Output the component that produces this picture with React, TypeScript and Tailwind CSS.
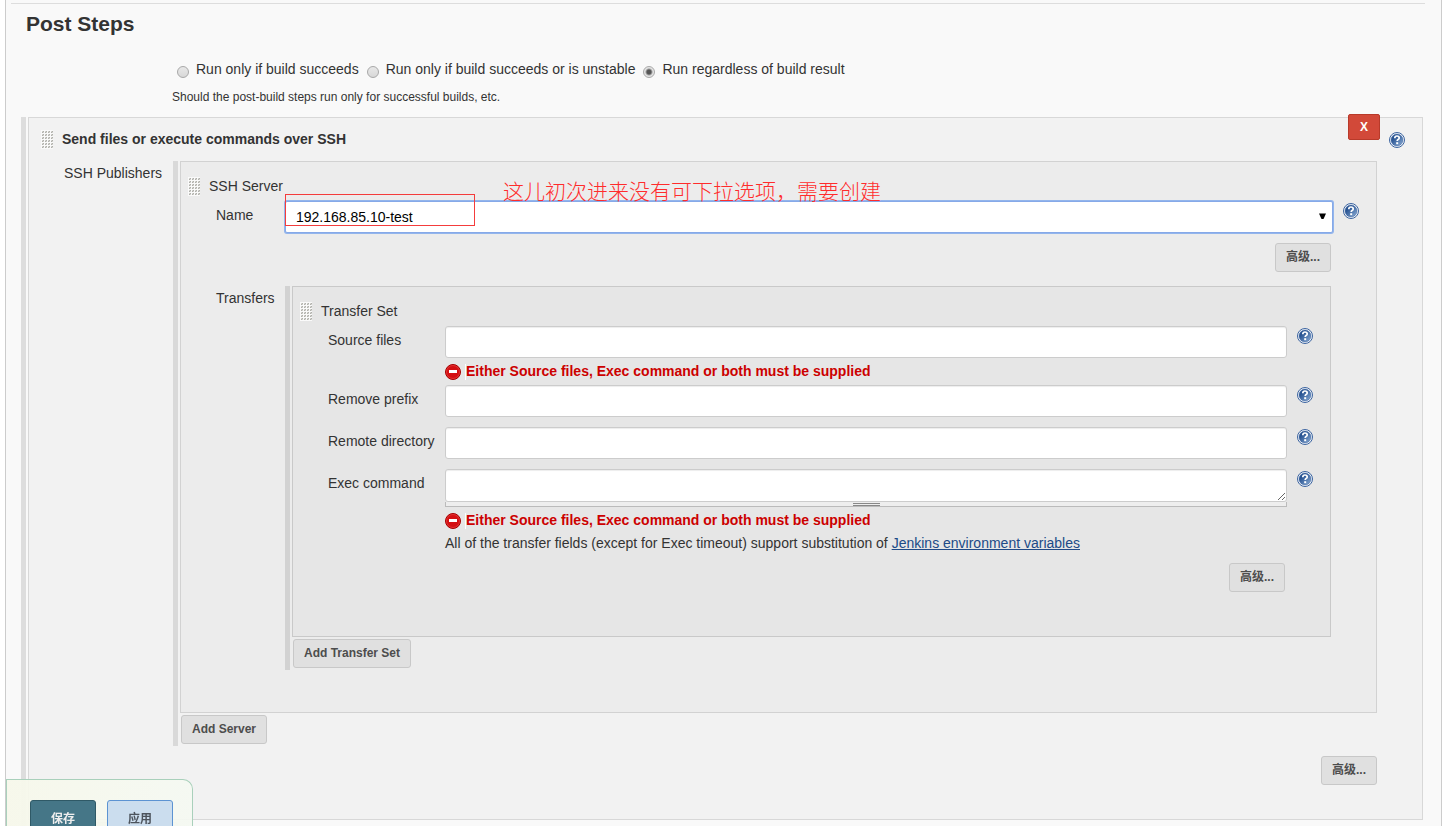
import type { ReactNode } from 'react';
import { useState } from 'react';
import clsx from 'clsx';

const RUN_OPTIONS = [
  { value: 'success', label: 'Run only if build succeeds' },
  { value: 'unstable', label: 'Run only if build succeeds or is unstable' },
  { value: 'always', label: 'Run regardless of build result' },
];

const SUPPLY_ERROR = 'Either Source files, Exec command or both must be supplied';

export default function App() {
  const [runWhen, setRunWhen] = useState('always');

  return (
    <div className="h-screen overflow-hidden bg-white font-['Liberation_Sans','Noto_Sans_CJK_SC',sans-serif] text-sm text-[#333]">
      <main className="mr-[6px] ml-[5px] min-h-screen border-x border-[#ccc] bg-[#f9f9f9] pt-[3px]">
        <hr className="mr-4 ml-[5px] border-[#ddd]" />
        <h1 className="mt-[6px] ml-5 text-[21px] leading-7 font-bold">Post Steps</h1>

        <div className="mt-[21px] ml-[171px] flex h-5 items-center gap-2">
          {RUN_OPTIONS.map((opt) => (
            <label key={opt.value} className="flex items-center gap-[7px] leading-5">
              <input
                type="radio"
                name="run-when"
                checked={runWhen === opt.value}
                onChange={() => setRunWhen(opt.value)}
                className="mt-[6px] size-3 appearance-none rounded-full border border-[#a8a8a8] bg-[linear-gradient(#e8e8e8,#d8d8d8)] checked:bg-[radial-gradient(circle,#555_0_2px,#e4e4e4_4px)]"
              />
              {opt.label}
            </label>
          ))}
        </div>
        <p className="mt-[10px] mb-3 ml-[166px] text-xs leading-4">
          Should the post-build steps run only for successful builds, etc.
        </p>

        <div className="mr-[18px] ml-[15px]">
          <Repeatable
            barClass="bg-[#ddd]"
            boxClass="border-[#d8d8d8] bg-[#f2f2f2]"
            footer={<button type="button" className="h-[29px] w-[149px] rounded-[3px] border border-[#ccc] bg-[#e0e0e0]" />}
          >
            <button
              type="button"
              className="absolute -top-1 right-[42px] h-[26px] w-8 rounded-xs border border-[#b83a2a] bg-[#d24939] text-xs font-bold text-white"
            >
              X
            </button>
            <div className="absolute top-[14px] right-[17px]">
              <HelpIcon />
            </div>
            <BlockTitle className="mt-3 pl-3 font-bold">Send files or execute commands over SSH</BlockTitle>
            <div className="mt-3 mr-[45px] flex">
              <div className="w-36 shrink-0 pl-[35px] leading-6">SSH Publishers</div>
              <div className="min-w-0 flex-1">
                <SshServer />
              </div>
            </div>
            <div className="mt-[10px] mr-[45px] mb-[34px] flex justify-end">
              <GrayButton>高级...</GrayButton>
            </div>
          </Repeatable>
        </div>
      </main>

      <SaveBar />
    </div>
  );
}

function SshServer() {
  return (
    <Repeatable
      barClass="bg-[#d9d9d9]"
      boxClass="border-[#d2d2d2] bg-[#ececec]"
      footer={<GrayButton>Add Server</GrayButton>}
    >
      <BlockTitle className="mt-[15px] pl-[7px]">SSH Server</BlockTitle>
      <div className="mt-[5px] flex">
        <label htmlFor="server-name" className="w-[104px] shrink-0 pl-[35px] leading-7">
          Name
        </label>
        <div className="relative min-w-0 flex-1">
          <select
            id="server-name"
            className="block h-8 w-full appearance-none rounded-xs border border-[#86a9e8] bg-white pl-[10px] text-sm text-black ring-1 ring-[#93b5ec]"
          >
            <option>192.168.85.10-test</option>
          </select>
          <svg className="pointer-events-none absolute top-3 right-[7px]" width="7" height="7" viewBox="0 0 7 7">
            <path d="M0 0.500h7L4.500 6h-2z" fill="#000" />
          </svg>
          {/* hand-made note on top of the field */}
          <div className="pointer-events-none absolute -top-[7px] left-0 h-8 w-[190px] border border-[#f43c3c]" />
          <p className="pointer-events-none absolute -top-[25px] left-[218px] font-['Noto_Sans_CJK_SC',sans-serif] text-[21px] leading-7 font-light whitespace-nowrap text-[#ff2c2c]">
            这儿初次进来没有可下拉选项，需要创建
          </p>
        </div>
        <HelpCell />
      </div>
      <div className="mt-[10px] mr-[45px] flex justify-end">
        <GrayButton>高级...</GrayButton>
      </div>
      <div className="mt-[14px] mr-[45px] mb-[42px] flex">
        <div className="w-[104px] shrink-0 pl-[35px] leading-6">Transfers</div>
        <div className="min-w-0 flex-1">
          <TransferSet />
        </div>
      </div>
    </Repeatable>
  );
}

function TransferSet() {
  return (
    <Repeatable
      barClass="bg-[#d2d2d2]"
      boxClass="border-[#c9c9c9] bg-[#e6e6e6]"
      footer={<GrayButton>Add Transfer Set</GrayButton>}
    >
      <BlockTitle className="mt-[15px] pl-[7px]">Transfer Set</BlockTitle>
      <div className="mt-[5px]">
        <FieldRow id="source-files" label="Source files">
          <TextInput id="source-files" />
        </FieldRow>
        <FieldError />
        <FieldRow id="remove-prefix" label="Remove prefix">
          <TextInput id="remove-prefix" />
        </FieldRow>
        <div className="h-[10px]" />
        <FieldRow id="remote-directory" label="Remote directory">
          <TextInput id="remote-directory" />
        </FieldRow>
        <div className="h-[10px]" />
        <FieldRow id="exec-command" label="Exec command">
          <textarea
            id="exec-command"
            className="block h-[33px] w-full rounded-[3px] border border-[#ccc] bg-white px-2 shadow-[inset_0_1px_1px_rgba(0,0,0,0.075)]"
          />
          <div className="flex h-[5px] justify-center border-x border-b border-[#bbb] bg-[#eee]">
            <span className="mt-px h-[3px] w-[27px] border-y border-[#888]" />
          </div>
        </FieldRow>
        <FieldError />
        <p className="-mt-px ml-[152px] leading-5">
          All of the transfer fields (except for Exec timeout) support substitution of{' '}
          <a href="#env" className="text-[#204a87] underline">
            Jenkins environment variables
          </a>
        </p>
      </div>
      <div className="mt-[10px] mr-[45px] mb-11 flex justify-end">
        <GrayButton>高级...</GrayButton>
      </div>
    </Repeatable>
  );
}

function SaveBar() {
  return (
    <div className="fixed bottom-0 left-[6px] flex h-[47px] w-[187px] gap-[11px] overflow-hidden rounded-tr-[10px] border-t border-r border-l border-[#a9d0bb] bg-linear-to-r from-[#f6f7ea]/95 to-[#f4f8f1]/95 pt-5 pl-[23px]">
      <button
        type="button"
        className="h-[38px] w-[66px] shrink-0 rounded-[3px] border border-[#2f5966] bg-[#457687] text-xs font-bold text-[#eee]"
      >
        保存
      </button>
      <button
        type="button"
        className="h-[38px] w-[66px] shrink-0 rounded-[3px] border border-[#5c93d2] bg-[#cbddee] text-xs font-bold text-[#4d545d]"
      >
        应用
      </button>
    </div>
  );
}

// vertical drag bar on the left, boxed entry, "add" button under it
function Repeatable({
  barClass,
  boxClass,
  footer,
  children,
}: {
  barClass: string;
  boxClass: string;
  footer: ReactNode;
  children: ReactNode;
}) {
  return (
    <div className="flex gap-[2px]">
      <div className={clsx('w-[5px] shrink-0', barClass)} />
      <div className="min-w-0 flex-1">
        <div className={clsx('relative flow-root border', boxClass)}>{children}</div>
        <div className="flex py-[2px] pl-px">{footer}</div>
      </div>
    </div>
  );
}

function BlockTitle({ className, children }: { className?: string; children: ReactNode }) {
  return (
    <div className={clsx('flex h-[19px] gap-[9px]', className)}>
      <DragHandle />
      <span className="leading-[19px]">{children}</span>
    </div>
  );
}

function FieldRow({ id, label, children }: { id: string; label: string; children: ReactNode }) {
  return (
    <div className="flex">
      <label htmlFor={id} className="w-[152px] shrink-0 pl-[35px] leading-7 whitespace-nowrap">
        {label}
      </label>
      <div className="min-w-0 flex-1">{children}</div>
      <HelpCell />
    </div>
  );
}

function TextInput({ id }: { id: string }) {
  return (
    <input
      id={id}
      type="text"
      className="block h-8 w-full rounded-[3px] border border-[#ccc] bg-white px-2 shadow-[inset_0_1px_1px_rgba(0,0,0,0.075)]"
    />
  );
}

function FieldError() {
  return (
    <div className="ml-[152px] flex h-[27px] items-center gap-1 font-bold text-[#c00]">
      <svg width="16" height="16" viewBox="0 0 16 16">
        <circle cx="8" cy="8" r="7.500" fill="#d40f12" stroke="#a40000" />
        <circle cx="8" cy="8" r="6.500" fill="none" stroke="#ef4a4a" strokeOpacity="0.6" />
        <rect x="4" y="6" width="8" height="3" fill="#fff" />
      </svg>
      <span className="h-4 border-l border-white leading-[14px]">{SUPPLY_ERROR}</span>
    </div>
  );
}

function GrayButton({ children }: { children: ReactNode }) {
  return (
    <button
      type="button"
      className="h-[29px] rounded-[3px] border border-[#c8c8c8] bg-[#e0e0e0] px-[10px] pb-[2px] text-xs font-bold text-[#4d4d4d]"
    >
      {children}
    </button>
  );
}

function HelpCell() {
  return (
    <div className="w-[43px] shrink-0 pt-[2px] pl-[10px]">
      <HelpIcon />
    </div>
  );
}

function HelpIcon() {
  return (
    <svg className="block" width="16" height="16" viewBox="0 0 16 16">
      <defs>
        <linearGradient id="help-fill" x1="0" y1="0" x2="1" y2="1">
          <stop offset="0.3" stopColor="#2a5593" />
          <stop offset="1" stopColor="#8fb0d8" />
        </linearGradient>
      </defs>
      <circle cx="8" cy="8" r="7.500" fill="#fff" stroke="#3a639f" />
      <circle cx="8" cy="8" r="6" fill="url(#help-fill)" stroke="#3a639f" strokeWidth="0.5" />
      <path
        d="M5.800 6.200C5.800 4.600 6.800 4 8 4s2.200.7 2.200 1.900c0 1.500-2 1.600-2 3.100"
        fill="none"
        stroke="#fff"
        strokeWidth="1.700"
      />
      <rect x="7.200" y="10.200" width="2" height="2" fill="#fff" />
    </svg>
  );
}

function DragHandle() {
  return (
    <svg className="block shrink-0" width="12" height="19" viewBox="0 0 12 19">
      <rect width="12" height="19" fill="#fafafa" />
      {[1, 4, 7, 10, 13, 16].map((y) =>
        [1, 4, 7, 10].map((x) => (
          <g key={`${x}-${y}`}>
            <rect x={x} y={y} width="2" height="2" fill="#d2d2ce" />
            <rect x={x + 1} y={y} width="1" height="1" fill="#b0b0ab" />
            <rect x={x} y={y + 1} width="1" height="1" fill="#b0b0ab" />
          </g>
        )),
      )}
    </svg>
  );
}
